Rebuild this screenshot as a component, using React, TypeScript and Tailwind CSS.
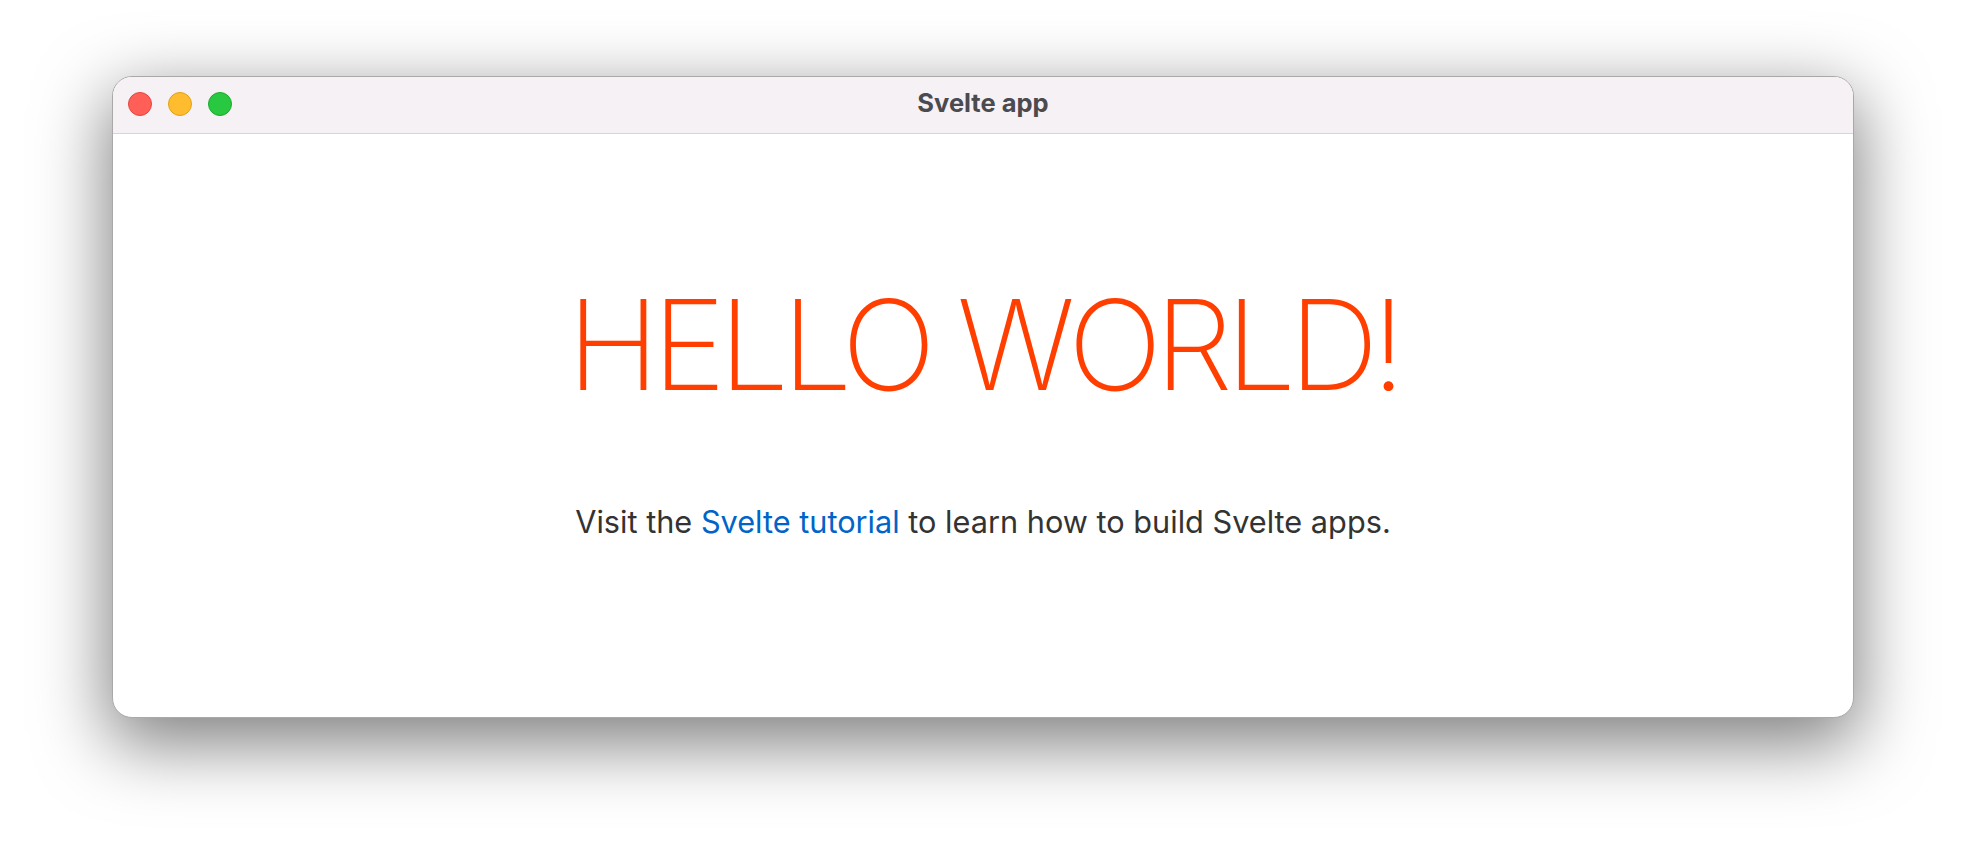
export default function App() {
  return (
    <div className="w-[1966px] h-[866px] bg-white overflow-hidden pt-[76px] pl-[112px]">
      <div className="w-[1742px] h-[642px] rounded-[20px] border border-[#a9a9a9] bg-white overflow-hidden flex flex-col shadow-[0_22px_70px_4px_rgba(0,0,0,0.5)]">
        <div className="relative h-[57px] shrink-0 bg-[#f6f1f5] border-b border-[#d6d6d6] flex items-center justify-center">
          <div className="absolute left-[15px] top-[15px] flex gap-[16px]">
            <span className="w-[24px] h-[24px] rounded-full bg-[#ff5f57] border border-[#e2463f]" />
            <span className="w-[24px] h-[24px] rounded-full bg-[#febc2e] border border-[#e1a116]" />
            <span className="w-[24px] h-[24px] rounded-full bg-[#28c840] border border-[#1aab29]" />
          </div>
          <span className="-mt-[3px] text-[25.5px] font-bold text-[#4b4a4e] font-['Inter',sans-serif]">Svelte app</span>
        </div>
        <div className="flex-1 flex flex-col items-center font-['Inter',sans-serif]">
          <h1 className="mt-[148px] text-[125px] leading-none font-[150] tracking-[-7.2px] text-[#ff3e00] uppercase">Hello world!</h1>
          <p className="mt-[92px] text-[30.7px] text-[#333333]">
            Visit the <a className="text-[#0064c8]">Svelte tutorial</a> to learn how to build Svelte apps.
          </p>
        </div>
      </div>
    </div>
  );
}
